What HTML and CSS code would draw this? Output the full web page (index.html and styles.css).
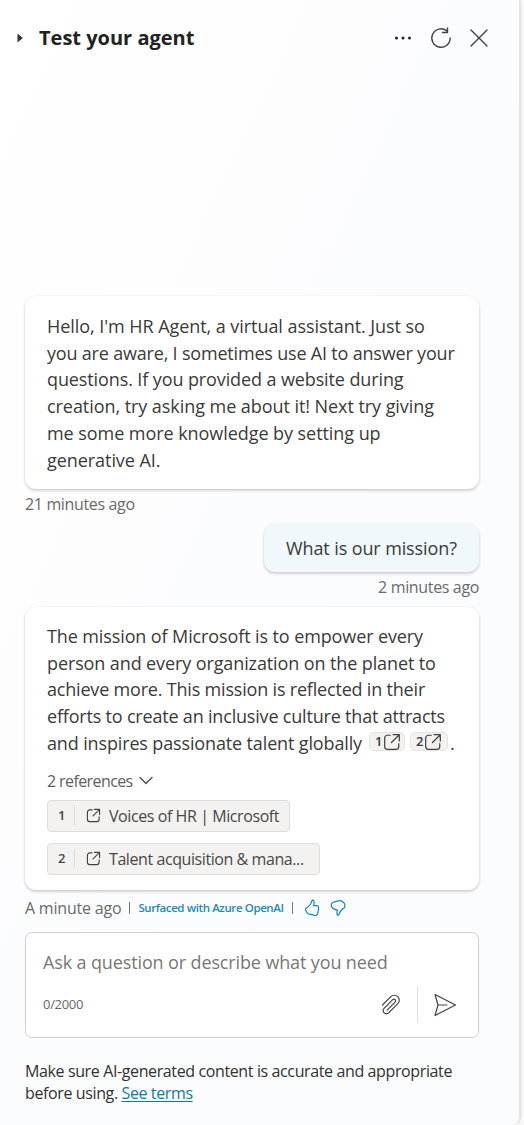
FILE: index.html
```html
<!DOCTYPE html>
<html lang="en">
<head>
<meta charset="utf-8">
<title>Test your agent</title>
<link rel="stylesheet" href="styles.css">
</head>
<body>
<svg width="0" height="0" class="defs">
  <symbol id="open" viewBox="0 0 16 16"><path d="M6.500 2H4a2.500 2.500 0 0 0-2.500 2.500v7.500A2.500 2.500 0 0 0 4 14.500h7.500A2.500 2.500 0 0 0 14 12V9.500M9 1.500h5.500V7M14.500 1.500L7.500 8.500"/></symbol>
</svg>
<main class="panel">
  <header class="header">
    <svg class="caret" width="6" height="10" viewBox="0 0 6 10"><path d="M.5 .5L5.800 5L.5 9.500z"/></svg>
    <h1 class="title">Test your agent</h1>
    <div class="actions">
      <svg width="18" height="18" viewBox="0 0 18 18"><g class="dots"><circle cx="2.500" cy="9" r="1.500"/><circle cx="9" cy="9" r="1.500"/><circle cx="15.500" cy="9" r="1.500"/></g></svg>
      <svg class="line" width="22" height="22" viewBox="0 0 22 22"><path d="M16.800 3.900A9.200 9.200 0 1 0 20.200 11M17.500 1v4.500h-5"/></svg>
      <svg class="line" width="18" height="18" viewBox="0 0 18 18"><path d="M1 1L17 17M17 1L1 17"/></svg>
    </div>
  </header>
  <section class="chat">
    <div class="bubble greeting">
      <span class="row loose">Hello, I'm HR Agent, a virtual assistant. Just so</span>
      <span class="row">you are aware, I sometimes use AI to answer your</span>
      <span class="row roomy">questions. If you provided a website during</span>
      <span class="row loose">creation, try asking me about it! Next try giving</span>
      <span class="row loose">me some more knowledge by setting up</span>
      <span class="row loose">generative AI.</span>
    </div>
    <div class="time">21 minutes ago</div>
    <div class="bubble user"><span class="row roomy">What is our mission?</span></div>
    <div class="time time-right">2 minutes ago</div>
    <div class="bubble answer">
      <span class="row roomy">The mission of Microsoft is to empower every</span>
      <span class="row roomy">person and every organization on the planet to</span>
      <span class="row">achieve more. This mission is reflected in their</span>
      <span class="row">efforts to create an inclusive culture that attracts</span>
      <div class="row cited"><span class="claim">and inspires passionate talent globally</span><span class="cite">1<svg class="line" width="18" height="18"><use href="#open"/></svg></span><span class="cite">2<svg class="line" width="18" height="18"><use href="#open"/></svg></span><span class="stop">.</span></div>
      <div class="refs"><span>2 references</span><svg class="line" width="14" height="9" viewBox="0 0 14 9"><path d="M1 1.500L7 7.500L13 1.500"/></svg></div>
      <div class="ref ref-one"><b class="num">1</b><svg class="line" width="15" height="15"><use href="#open"/></svg><span>Voices of HR | Microsoft</span></div>
      <div class="ref ref-two"><b class="num">2</b><svg class="line" width="15" height="15"><use href="#open"/></svg><span>Talent acquisition &amp; mana...</span></div>
    </div>
    <div class="meta">
      <span class="ago">A minute ago</span><i class="bar"></i><span class="azure">Surfaced with Azure OpenAI</span><i class="bar"></i>
      <svg class="thumb" width="16" height="18" viewBox="0 0 16 18"><path d="M8.200 1.200C9.900 1 10.400 2.600 10.100 4.200L9.700 6.700h2.700c1.500 0 2.400 1.100 2.200 2.500l-.8 5c-.3 1.700-1.600 2.600-3.300 2.200l-6-1.600c-1-.3-1.600-.9-2-1.800l-.9-1.900c-.4-1 0-1.800.9-2.200C5.400 7.600 7.300 4.500 8.200 1.200z"/></svg>
      <svg class="thumb down" width="16" height="18" viewBox="0 0 16 18"><path d="M8.500 16.200C6.900 16.300 6.700 14.600 7 13l.3-1.800C5.500 10.900 2.600 9.800 1.500 7.600 .7 5.500 1.600 3.800 3.500 3.200l5.800-1.500c1.100-.3 1.900-.1 2.700.5l1.900 1.500c.7.600.9 1.400.9 2.300v1.400c0 1-.4 1.600-1.300 2-2.400 1.300-3.900 3.900-5 6.800z"/></svg>
    </div>
  </section>
  <section class="composer">
    <div class="placeholder">Ask a question or describe what you need</div>
    <div class="tools">
      <span class="count">0/2000</span>
      <svg class="line clip" width="20" height="22" viewBox="0 0 20 22"><path d="M1.500 11L9.800 2.700a4.900 4.900 0 0 1 7 7L7.700 18.900a3.200 3.200 0 0 1-4.600-4.600L11.700 5.700a1.650 1.650 0 0 1 2.400 2.400L6.100 16.100"/></svg>
      <i class="split"></i>
      <svg class="line" width="24" height="24" viewBox="0 0 24 24"><path d="M2 1.500L22.500 12L2 22.500L5 12zM5 12h9"/></svg>
    </div>
  </section>
  <footer class="footer">
    <div class="note">Make sure AI-generated content is accurate and appropriate</div>
    <div class="note second"><span>before using.</span> <a class="terms" href="#">See terms</a></div>
  </footer>
</main>
</body>
</html>
```
FILE: styles.css
```css
* { box-sizing: border-box; }
body { margin: 0; background: #f8f8f8; font-family: "Open Sans", "Noto Sans", sans-serif; color: #3b3a39; }
.defs { position: absolute; }
svg { display: block; flex: none; }
.line, .thumb { fill: none; stroke: #424242; stroke-width: 1.2; stroke-linejoin: round; stroke-linecap: round; }
.panel { width: 520px; height: 1125px; padding: 0 41px 0 25px; display: flex; flex-direction: column; background: linear-gradient(115deg, #fff 0, #fdfdfe 35%, #fbfcfe 60%, #fbfcfe 100%); border-right: 1px solid #e4e4e6; border-bottom-right-radius: 8px; box-shadow: 1px 0 2px #ddd; }
.header { height: 76px; margin-left: -8px; display: flex; align-items: center; flex: none; }
.caret { fill: #333; }
.title { margin: 0 0 0 16px; font-size: 20px; line-height: 28px; font-weight: 700; letter-spacing: 0; white-space: nowrap; color: #222; }
.actions { margin-left: auto; margin-right: -10px; display: flex; align-items: center; gap: 18px; }
.actions .line { stroke-width: 1.4; }
.dots { fill: #222; }
.chat { width: 454px; margin-top: 220px; display: flex; flex-direction: column; }
.bubble { background: #fff; border-radius: 11px; box-shadow: 0 2px 3px rgba(0,0,0,.16), 0 0 2px rgba(0,0,0,.09); padding: 17px 22px 0; }
.row { display: block; font-size: 18px; line-height: 26.7px; white-space: nowrap; letter-spacing: -.19px; }
.roomy { letter-spacing: -.11px; }
.loose { letter-spacing: -.06px; }
.greeting { height: 193px; }
.time { height: 35px; line-height: 30px; font-size: 16px; color: #6b6a69; letter-spacing: -.35px; }
.user { align-self: flex-end; width: 215px; height: 48px; padding-top: 11px; background: #f0f8fc; }
.time-right { text-align: right; }
.answer { height: 283px; padding-top: 16px; }
.cited { display: flex; align-items: center; }
.claim { letter-spacing: -.14px; }
.cite { display: flex; align-items: center; width: 36px; height: 19px; padding: 0 0 0 5px; margin: -3px 0 0 7px; gap: 1px; background: #f3f2f1; border: 1px solid #e5e4e3; border-radius: 5px; font-size: 13px; line-height: 17px; font-weight: 600; letter-spacing: 0; }
.cite + .cite { width: 38px; margin-left: 5px; }
.cite .line { stroke-width: 1.1; }
.stop { margin-left: 2px; }
.refs { display: flex; align-items: center; gap: 6px; height: 22px; margin: 13px 0 8px; font-size: 16px; line-height: 22px; color: #5f5e5d; letter-spacing: -.6px; white-space: nowrap; }
.ref { display: flex; align-items: center; height: 32px; border: 1px solid #dedddc; border-radius: 4px; background: #f3f2f1; font-size: 16px; line-height: 22px; white-space: nowrap; color: #484746; letter-spacing: -.42px; }
.ref-one { width: 243px; margin-bottom: 11px; }
.ref-two { width: 273px; }
.num { width: 27px; height: 19px; margin-right: 11px; border-right: 1px solid #dcdbda; font-size: 13px; line-height: 19px; font-weight: 600; padding-left: 10px; }
.ref span { margin-left: 8px; }
.meta { display: flex; align-items: center; height: 36px; color: #6b6a69; font-size: 16px; white-space: nowrap; }
.ago { letter-spacing: -.2px; }
.bar { width: 1px; height: 12px; margin: 0 8px 0 8px; background: #777; }
.azure { font-size: 11.5px; font-weight: 600; color: #1a8bb3; letter-spacing: -.4px; margin-top: -2px; }
.thumb { stroke: #1687b3; stroke-width: 1.2; margin-left: 3px; }
.down { margin-left: 10px; }
.composer { width: 454px; height: 106px; margin-top: 6px; padding: 16px 21px 0 17px; border: 1px solid #d2d0ce; border-radius: 7px; background: #fff; flex: none; }
.placeholder { font-size: 18px; line-height: 26px; color: #797775; letter-spacing: -.13px; white-space: nowrap; }
.tools { display: flex; align-items: center; height: 37px; margin-top: 11px; }
.count { font-size: 13px; color: #686766; letter-spacing: -.3px; margin-top: -2px; }
.clip { margin-left: auto; }
.split { width: 1px; height: 37px; margin: 0 15px 0 16px; background: #e1dfdd; }
.footer { padding-top: 23px; }
.note { font-size: 16px; line-height: 21.500px; letter-spacing: -.38px; white-space: nowrap; color: #323130; }
.terms { color: #117b97; text-underline-offset: 2px; }
```
